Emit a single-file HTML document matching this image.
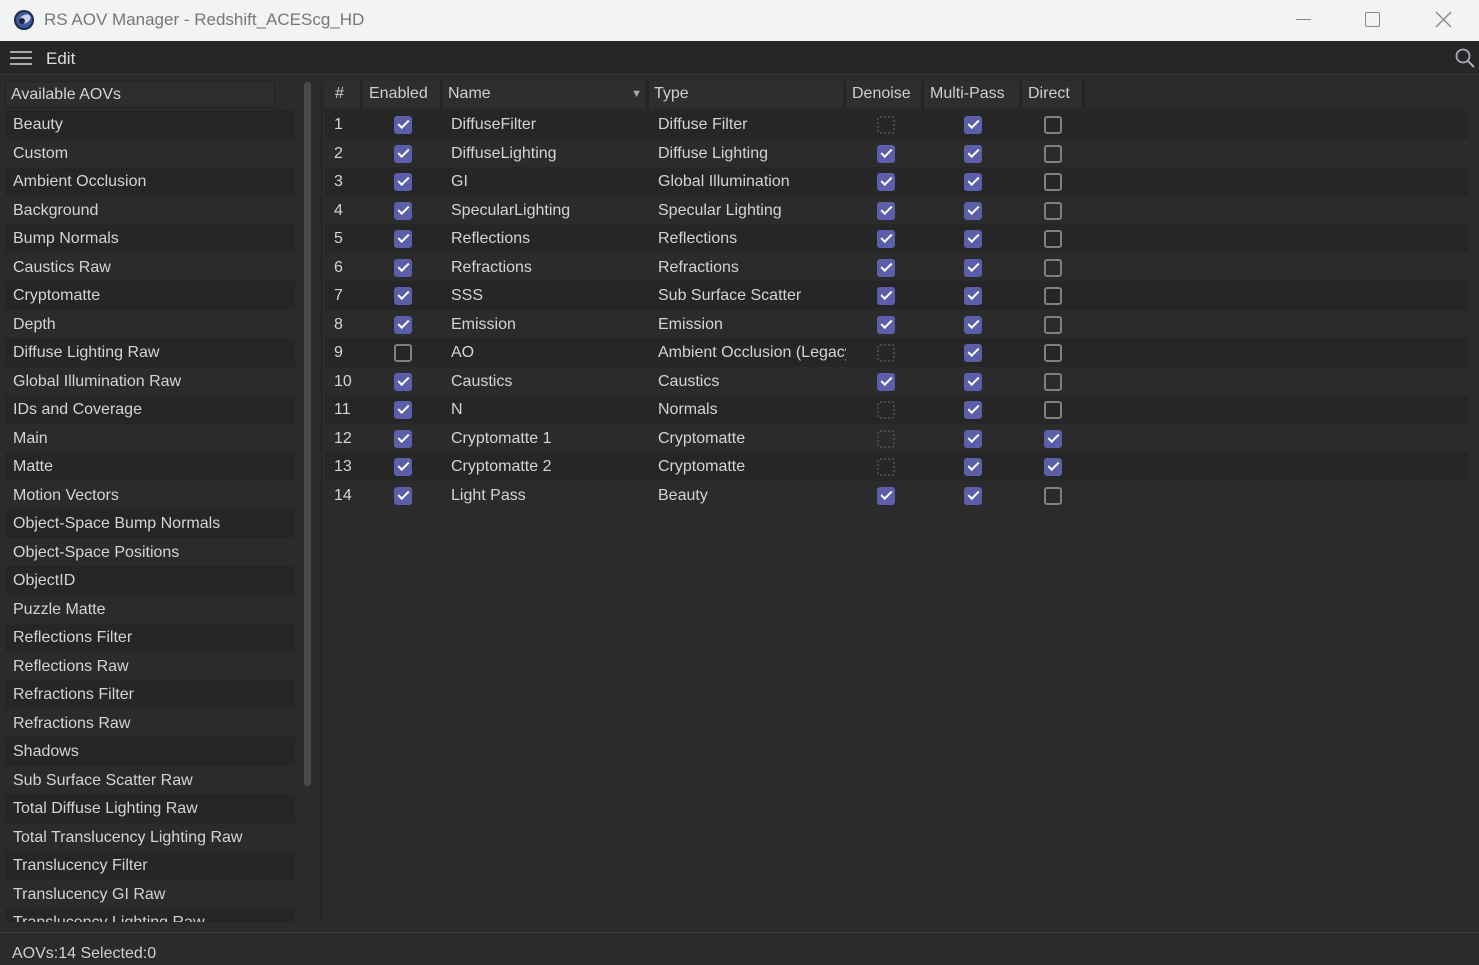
<!DOCTYPE html>
<html><head><meta charset="utf-8"><style>
*{margin:0;padding:0;box-sizing:border-box}
body{width:1479px;height:965px;background:#2b2b2b;font-family:"Liberation Sans",sans-serif;font-size:16px;color:#d4d4d4;position:relative;overflow:hidden}
.title{position:absolute;left:0;top:0;width:1479px;height:41px;background:#f2f3f3;color:#777}
.title .t{position:absolute;left:44px;top:10px;font-size:17px}
.menu{position:absolute;top:41px;left:0;width:1479px;height:34px;background:#262626;border-bottom:1px solid #3a3a3a}
.a{position:absolute}
.lr{position:absolute;left:5px;width:290px;height:28.5px;padding-left:8px;line-height:30px}
.d{background:#262626}
.tr{position:absolute;left:325px;width:1143px;height:28.5px}
.tr span{position:absolute;top:6px}
.cb{position:absolute;top:6px;width:18px;height:18px;border-radius:3px;background:#5b5ea8}
.cb::after{content:"";position:absolute;left:4px;top:4px;width:9px;height:4px;border-left:2px solid #fff;border-bottom:2px solid #fff;transform:rotate(-45deg)}
.un{position:absolute;top:6px;width:18px;height:18px;border-radius:3px;border:2px solid #808080}
.dis{position:absolute;top:6px;width:18px;height:18px;border-radius:3px;border:2px dotted #4a4a4a}
.h{position:absolute;top:81px;height:27px;background:#2e2e2e;border-right:3px solid #242424;padding-left:6px;line-height:26px;color:#cfcfcf}
</style></head><body>
<div class="title">
<svg class="a" style="left:13px;top:9px" width="22" height="22"><circle cx="11" cy="11" r="10" fill="#1c2a48"/><circle cx="11" cy="11" r="8" fill="#3c5a9c"/><ellipse cx="12" cy="10" rx="6" ry="4" fill="#c8d4ec" transform="rotate(-30 12 10)"/><circle cx="9" cy="12" r="3" fill="#223"/></svg>
<div class="t">RS AOV Manager - Redshift_ACEScg_HD</div>
<div class="a" style="left:1296px;top:19px;width:15px;height:1px;background:#888"></div>
<div class="a" style="left:1365px;top:12px;width:15px;height:15px;border:1.5px solid #888;border-radius:2px"></div>
<svg class="a" style="left:1435px;top:11px" width="17" height="17"><path d="M1 1L16 16M16 1L1 16" stroke="#888" stroke-width="1.3"/></svg>
</div>
<div class="menu">
<div class="a" style="left:10px;top:10px;width:22px;height:2px;background:#aaa;box-shadow:0 6px 0 #aaa,0 12px 0 #aaa"></div>
<div class="a" style="left:46px;top:8px;font-size:17px;color:#ddd">Edit</div>
<svg class="a" style="left:1454px;top:6px" width="22" height="22"><circle cx="9" cy="9" r="6.5" stroke="#aab" stroke-width="1.8" fill="none"/><path d="M14 14L20 20" stroke="#aab" stroke-width="2"/></svg>
</div>
<div class="a" style="left:5px;top:81px;width:270px;height:27px;background:#2e2e2e;border:1px solid #222;padding-left:5px;line-height:26px">Available AOVs</div>
<div class="a" style="left:304px;top:82px;width:7px;height:704px;background:#4a4a4a;border-radius:4px"></div>
<div class="a" style="left:321px;top:82px;width:1px;height:840px;background:#1f1f1f"></div>
<div class="lr d" style="top:110px">Beauty</div>
<div class="lr" style="top:138.5px">Custom</div>
<div class="lr d" style="top:167px">Ambient Occlusion</div>
<div class="lr" style="top:195.5px">Background</div>
<div class="lr d" style="top:224px">Bump Normals</div>
<div class="lr" style="top:252.5px">Caustics Raw</div>
<div class="lr d" style="top:281px">Cryptomatte</div>
<div class="lr" style="top:309.5px">Depth</div>
<div class="lr d" style="top:338px">Diffuse Lighting Raw</div>
<div class="lr" style="top:366.5px">Global Illumination Raw</div>
<div class="lr d" style="top:395px">IDs and Coverage</div>
<div class="lr" style="top:423.5px">Main</div>
<div class="lr d" style="top:452px">Matte</div>
<div class="lr" style="top:480.5px">Motion Vectors</div>
<div class="lr d" style="top:509px">Object-Space Bump Normals</div>
<div class="lr" style="top:537.5px">Object-Space Positions</div>
<div class="lr d" style="top:566px">ObjectID</div>
<div class="lr" style="top:594.5px">Puzzle Matte</div>
<div class="lr d" style="top:623px">Reflections Filter</div>
<div class="lr" style="top:651.5px">Reflections Raw</div>
<div class="lr d" style="top:680px">Refractions Filter</div>
<div class="lr" style="top:708.5px">Refractions Raw</div>
<div class="lr d" style="top:737px">Shadows</div>
<div class="lr" style="top:765.5px">Sub Surface Scatter Raw</div>
<div class="lr d" style="top:794px">Total Diffuse Lighting Raw</div>
<div class="lr" style="top:822.5px">Total Translucency Lighting Raw</div>
<div class="lr d" style="top:851px">Translucency Filter</div>
<div class="lr" style="top:879.5px">Translucency GI Raw</div>
<div class="a" style="left:5px;top:908px;width:290px;height:14px;overflow:hidden"><div class="lr d" style="left:0;top:0">Translucency Lighting Raw</div></div>

<div class="a" style="left:325px;top:81px;width:1143px;height:28px;background:#2a2a2a"></div>
<div class="h" style="left:325px;width:38px;padding-left:10px">#</div>
<div class="h" style="left:363px;width:80px">Enabled</div>
<div class="h" style="left:443px;width:206px;padding-left:5px">Name<span style="position:absolute;right:4px;top:0;font-size:11px;color:#aaa">▼</span></div>
<div class="h" style="left:649px;width:197px;padding-left:5px">Type</div>
<div class="h" style="left:846px;width:78px">Denoise</div>
<div class="h" style="left:924px;width:98px">Multi-Pass</div>
<div class="h" style="left:1022px;width:63px">Direct</div>

<div class="tr d" style="top:110px"><span style="left:9px">1</span><i class="cb" style="left:69px"></i><span style="left:126px">DiffuseFilter</span><span style="left:333px">Diffuse Filter</span><i class="dis" style="left:552px"></i><i class="cb" style="left:639px"></i><i class="un" style="left:719px"></i></div>
<div class="tr" style="top:138.5px"><span style="left:9px">2</span><i class="cb" style="left:69px"></i><span style="left:126px">DiffuseLighting</span><span style="left:333px">Diffuse Lighting</span><i class="cb" style="left:552px"></i><i class="cb" style="left:639px"></i><i class="un" style="left:719px"></i></div>
<div class="tr d" style="top:167px"><span style="left:9px">3</span><i class="cb" style="left:69px"></i><span style="left:126px">GI</span><span style="left:333px">Global Illumination</span><i class="cb" style="left:552px"></i><i class="cb" style="left:639px"></i><i class="un" style="left:719px"></i></div>
<div class="tr" style="top:195.5px"><span style="left:9px">4</span><i class="cb" style="left:69px"></i><span style="left:126px">SpecularLighting</span><span style="left:333px">Specular Lighting</span><i class="cb" style="left:552px"></i><i class="cb" style="left:639px"></i><i class="un" style="left:719px"></i></div>
<div class="tr d" style="top:224px"><span style="left:9px">5</span><i class="cb" style="left:69px"></i><span style="left:126px">Reflections</span><span style="left:333px">Reflections</span><i class="cb" style="left:552px"></i><i class="cb" style="left:639px"></i><i class="un" style="left:719px"></i></div>
<div class="tr" style="top:252.5px"><span style="left:9px">6</span><i class="cb" style="left:69px"></i><span style="left:126px">Refractions</span><span style="left:333px">Refractions</span><i class="cb" style="left:552px"></i><i class="cb" style="left:639px"></i><i class="un" style="left:719px"></i></div>
<div class="tr d" style="top:281px"><span style="left:9px">7</span><i class="cb" style="left:69px"></i><span style="left:126px">SSS</span><span style="left:333px">Sub Surface Scatter</span><i class="cb" style="left:552px"></i><i class="cb" style="left:639px"></i><i class="un" style="left:719px"></i></div>
<div class="tr" style="top:309.5px"><span style="left:9px">8</span><i class="cb" style="left:69px"></i><span style="left:126px">Emission</span><span style="left:333px">Emission</span><i class="cb" style="left:552px"></i><i class="cb" style="left:639px"></i><i class="un" style="left:719px"></i></div>
<div class="tr d" style="top:338px"><span style="left:9px">9</span><i class="un" style="left:69px"></i><span style="left:126px">AO</span><span style="left:333px;width:188px;overflow:hidden;white-space:nowrap">Ambient Occlusion (Legacy)</span><i class="dis" style="left:552px"></i><i class="cb" style="left:639px"></i><i class="un" style="left:719px"></i></div>
<div class="tr" style="top:366.5px"><span style="left:9px">10</span><i class="cb" style="left:69px"></i><span style="left:126px">Caustics</span><span style="left:333px">Caustics</span><i class="cb" style="left:552px"></i><i class="cb" style="left:639px"></i><i class="un" style="left:719px"></i></div>
<div class="tr d" style="top:395px"><span style="left:9px">11</span><i class="cb" style="left:69px"></i><span style="left:126px">N</span><span style="left:333px">Normals</span><i class="dis" style="left:552px"></i><i class="cb" style="left:639px"></i><i class="un" style="left:719px"></i></div>
<div class="tr" style="top:423.5px"><span style="left:9px">12</span><i class="cb" style="left:69px"></i><span style="left:126px">Cryptomatte 1</span><span style="left:333px">Cryptomatte</span><i class="dis" style="left:552px"></i><i class="cb" style="left:639px"></i><i class="cb" style="left:719px"></i></div>
<div class="tr d" style="top:452px"><span style="left:9px">13</span><i class="cb" style="left:69px"></i><span style="left:126px">Cryptomatte 2</span><span style="left:333px">Cryptomatte</span><i class="dis" style="left:552px"></i><i class="cb" style="left:639px"></i><i class="cb" style="left:719px"></i></div>
<div class="tr" style="top:480.5px"><span style="left:9px">14</span><i class="cb" style="left:69px"></i><span style="left:126px">Light Pass</span><span style="left:333px">Beauty</span><i class="cb" style="left:552px"></i><i class="cb" style="left:639px"></i><i class="un" style="left:719px"></i></div>

<div class="a" style="left:0;top:932px;width:1479px;height:1px;background:#3a3a3a"></div>
<div class="a" style="left:12px;top:945px;color:#d0d0d0">AOVs:14 Selected:0</div>
</body></html>
